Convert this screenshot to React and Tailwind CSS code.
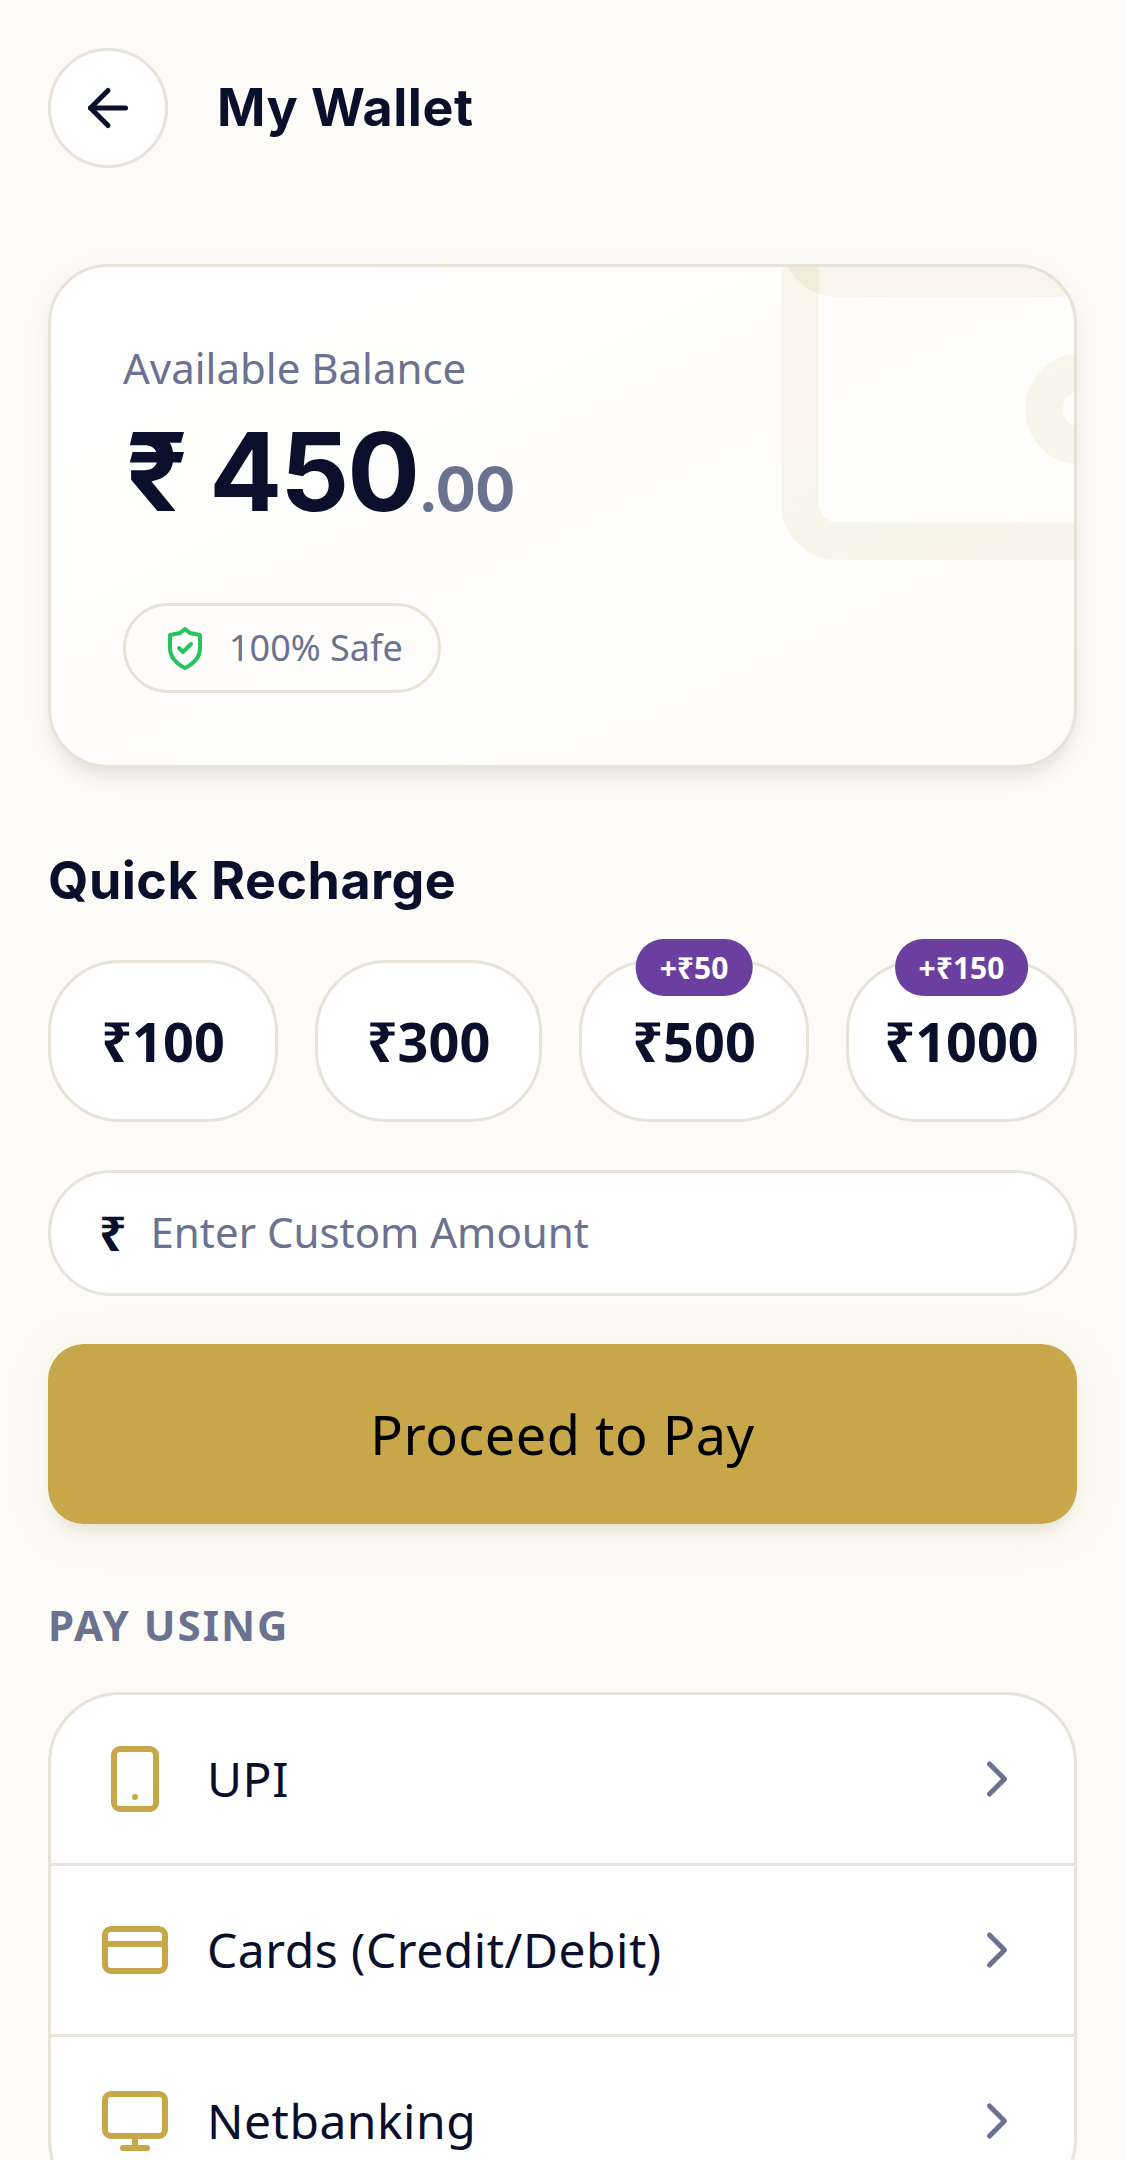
import React from "react";
import { ArrowLeft, ChevronRight, Smartphone, CreditCard, Monitor } from "lucide-react";

const body = { fontFamily: '"Noto Sans", sans-serif' };
const head = { fontFamily: 'Inter, "Noto Sans", sans-serif' };

function Chip({ amount, badge, className }) {
  return (
    <div className={"relative flex h-[162px] items-center justify-center rounded-[72px] border-[3px] border-[#e8e3d9] bg-white " + className}>
      {badge && (
        <div className="absolute left-1/2 top-[-24px] flex h-[57px] -translate-x-1/2 items-center rounded-[28px] bg-[#6b3fa0] px-[24px] text-[30px] font-bold whitespace-nowrap text-white">
          {badge}
        </div>
      )}
      <span className="text-[54px] leading-none font-bold text-[#0a0f2c]">{amount}</span>
    </div>
  );
}

function Row({ icon, label, last }) {
  return (
    <div className={"flex h-[171px] items-center border-b-[3px] pr-[47px] pl-[48px] " + (last ? "border-transparent" : "border-[#e8e3d9]")}>
      <div className="text-[#c8a74a]">{icon}</div>
      <span className="ml-[36px] flex-1 text-[48px] tracking-[0.5px] text-[#0a0f2c]">{label}</span>
      <ChevronRight size={60} strokeWidth={2} className="text-[#6b7290]" />
    </div>
  );
}

export default function App() {
  return (
    <div style={body} className="h-[2160px] overflow-hidden bg-[#fdfbf7] px-[48px] pt-[48px]">
      <div className="flex items-center">
        <div className="flex h-[120px] w-[120px] items-center justify-center rounded-full border-[3px] border-[#e8e3d9] bg-white">
          <ArrowLeft size={60} strokeWidth={2} className="text-[#0a0f2c]" />
        </div>
        <h1 style={head} className="ml-[49px] text-[52px] font-bold tracking-[0.5px] text-[#0a0f2c]">My Wallet</h1>
      </div>

      <div className="relative mt-[96px] h-[504px] overflow-hidden rounded-[60px] border-[3px] border-[#e8e3d9] bg-gradient-to-br from-white to-[#fdfcf9] pt-[72px] pl-[72px] shadow-[0_12px_18px_-6px_rgba(60,50,20,0.12),0_6px_36px_rgba(60,50,20,0.03)]">
        <svg className="absolute top-0 right-0" width="300" height="300" viewBox="0 0 300 300" fill="none" stroke="#c8a74a" strokeOpacity="0.1" strokeWidth="37.5">
          <path d="M26 0V237a37 37 0 0 0 37 37H300" />
          <path d="M26 -26a37 37 0 0 0 37 37H300" />
          <circle cx="307" cy="142" r="37" />
        </svg>
        <div className="relative text-[42px] leading-[58px] text-[#6b7290]">Available Balance</div>
        <div style={head} className="relative mt-[21px] ml-[3px] flex items-baseline leading-none font-bold text-[#0a0f2c]">
          <span className="text-[108px] tracking-[-2px]">₹ 450</span>
          <span className="text-[60px] tracking-[-1px] text-[#6b7290]">.00</span>
        </div>
        <div className="relative mt-[77px] flex h-[90px] w-[318px] items-center rounded-full border-[3px] border-[#e8e3d9] pl-[35px]">
          <svg width="48" height="48" viewBox="0 0 24 24" fill="none" stroke="#22c55e" strokeWidth="2" strokeLinecap="round" strokeLinejoin="round">
            <path d="M12 2.5 14.5 4.5 19.5 5.5V12C19.5 17 16 20 12 22 8 20 4.5 17 4.5 12V5.5L9.5 4.5Z" />
            <path d="m9 12 2 2 4-4" />
          </svg>
          <span className="ml-[20px] text-[36px] text-[#6b7290]">100% Safe</span>
        </div>
      </div>

      <h2 style={head} className="mt-[84px] text-[52px] leading-[58px] font-bold tracking-[0.5px] text-[#0a0f2c]">Quick Recharge</h2>

      <div className="mt-[50px] flex gap-[37px]">
        <Chip amount="₹100" className="w-[230px]" />
        <Chip amount="₹300" className="w-[227px]" />
        <Chip amount="₹500" badge="+₹50" className="w-[230px]" />
        <Chip amount="₹1000" badge="+₹150" className="w-[231px]" />
      </div>

      <div className="mt-[48px] flex h-[126px] items-center rounded-full border-[3px] border-[#e8e3d9] bg-white pl-[48px]">
        <span className="text-[48px] font-bold text-[#0a0f2c]">₹</span>
        <span className="ml-[24px] pb-[4px] text-[42px] text-[#6b7290]">Enter Custom Amount</span>
      </div>

      <div className="mt-[48px] flex h-[180px] items-center justify-center rounded-[36px] bg-[#c8a74a] text-[54px] tracking-[0.5px] text-black shadow-[0_12px_15px_-6px_rgba(60,50,20,0.1),0_6px_48px_rgba(200,167,74,0.1)]">
        Proceed to Pay
      </div>

      <div className="mt-[72px] text-[42px] leading-[58px] font-bold tracking-[2px] text-[#6b7290]">PAY USING</div>

      <div className="mt-[38px] overflow-hidden rounded-[72px] border-[3px] border-[#e8e3d9] bg-white">
        <Row icon={<Smartphone size={72} strokeWidth={2} />} label="UPI" />
        <Row icon={<CreditCard size={72} strokeWidth={2} />} label="Cards (Credit/Debit)" />
        <Row icon={<Monitor size={72} strokeWidth={2} />} label="Netbanking" last />
      </div>
    </div>
  );
}
